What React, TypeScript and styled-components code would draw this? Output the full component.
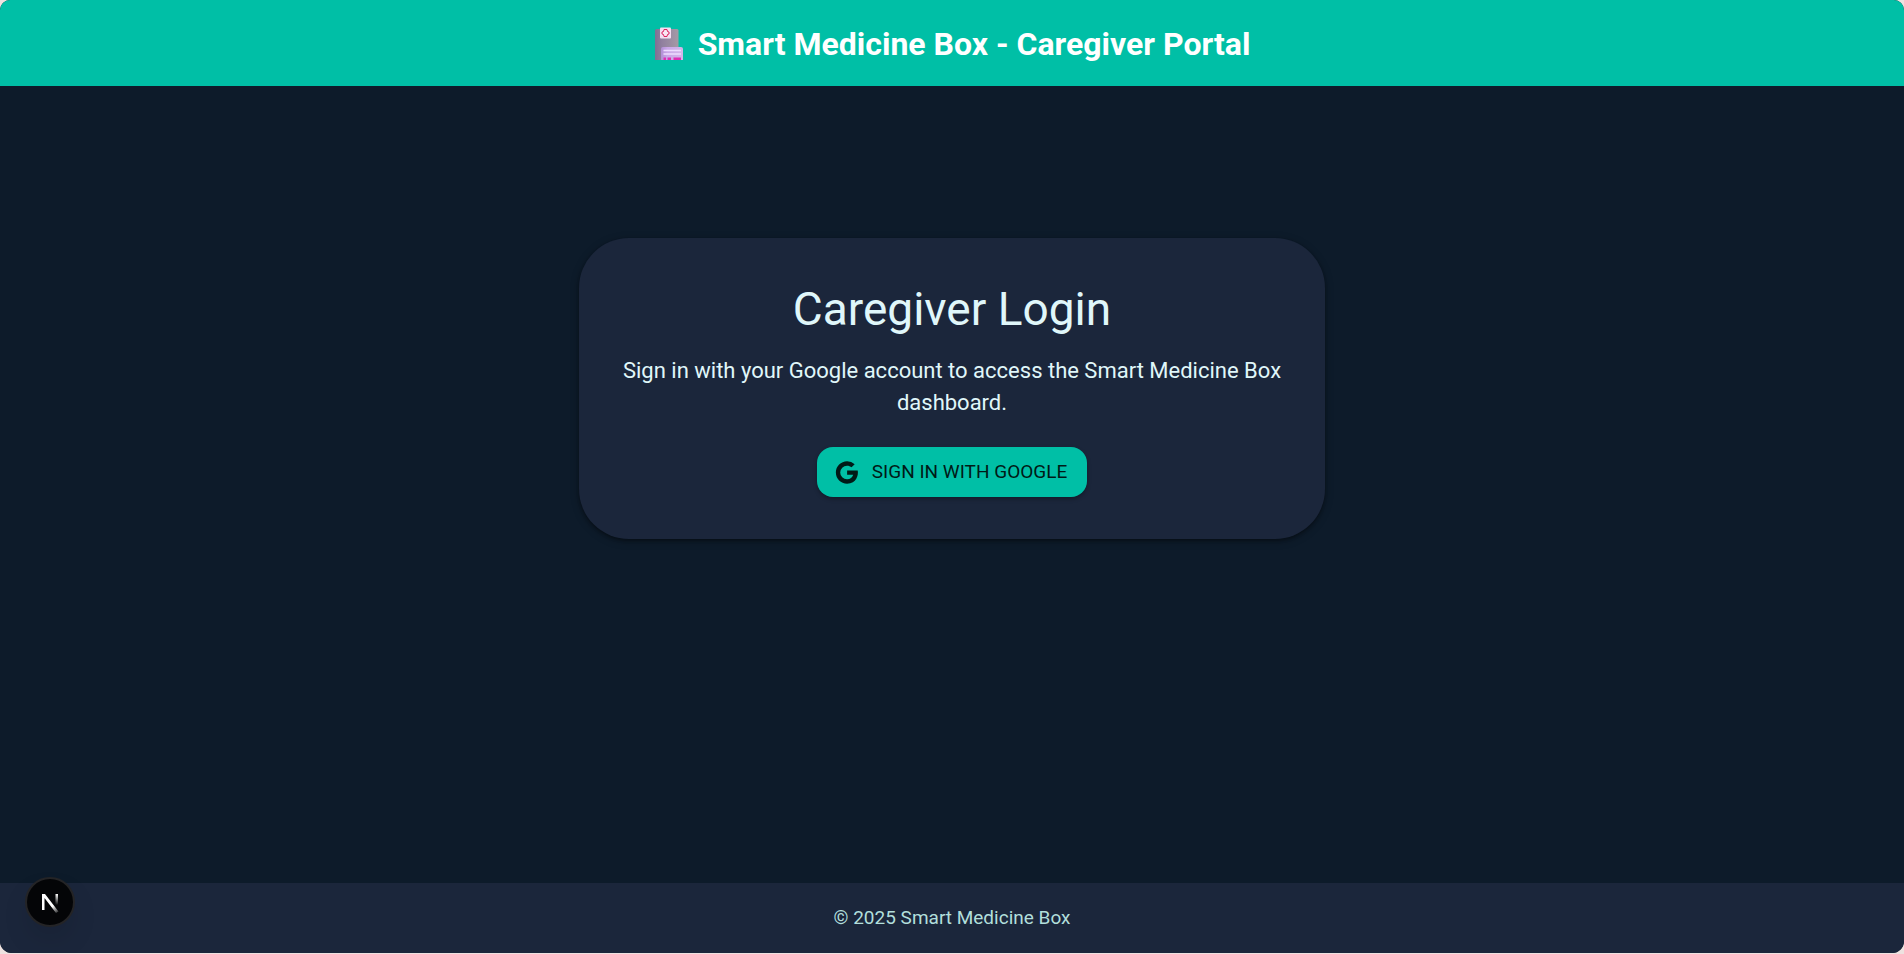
import React from "react";
import styled, { createGlobalStyle } from "styled-components";

const GlobalStyle = createGlobalStyle`
  *, *::before, *::after { box-sizing: border-box; }
  html { background: #eee2e0; }
  body {
    margin: 0;
    font-family: Roboto, "Liberation Sans", sans-serif;
    color: #e0f7fa;
  }
`;

const Page = styled.div`
  display: flex;
  flex-direction: column;
  min-height: calc(100vh - 1px);
  margin-bottom: 1px;
  border-radius: 10px 10px 12px 12px;
  overflow: hidden;
  background: #0d1b2a;
`;

const Header = styled.header`
  display: flex;
  align-items: center;
  justify-content: center;
  gap: 14px;
  padding: 21px 20px 19px;
  background: #00bfa6;
  color: #fff;
`;

const Brand = styled.h1`
  margin: 0;
  font-size: 32px;
  line-height: 46px;
  font-weight: 700;
`;

const Main = styled.main`
  flex: 1;
  display: flex;
  align-items: flex-start;
  justify-content: center;
  padding: 152px 20px 40px;
`;

const Card = styled.section`
  width: 100%;
  max-width: 746px;
  padding: 42px 40px;
  border-radius: 50px;
  background: #1b263b;
  box-shadow: 0 2px 3px rgba(0, 0, 0, 0.25), 0 2px 8px rgba(0, 0, 0, 0.3);
  text-align: center;
`;

const Title = styled.h2`
  margin: 0 0 17px;
  font-size: 46px;
  line-height: 58px;
  font-weight: 400;
`;

const Lead = styled.p`
  margin: 0 0 28px;
  font-size: 22px;
  line-height: 32px;
`;

const SignInButton = styled.button`
  display: inline-flex;
  align-items: center;
  gap: 12px;
  height: 50px;
  padding: 0 20px 0 16px;
  border: 0;
  border-radius: 16px;
  background: #00bfa6;
  color: #001a17;
  font-family: inherit;
  font-size: 19px;
  line-height: 32px;
  text-transform: uppercase;
  vertical-align: top;
  box-shadow: 0 2px 4px rgba(0, 0, 0, 0.3);
  cursor: pointer;
`;

const Footer = styled.footer`
  padding: 20px;
  background: #1b263b;
  color: #b2dfdb;
  font-size: 19px;
  line-height: 30px;
  text-align: center;
`;

const DevToolsButton = styled.button`
  position: fixed;
  left: 25px;
  bottom: 27px;
  display: flex;
  align-items: center;
  justify-content: center;
  width: 50px;
  height: 50px;
  padding: 0;
  border: 2px solid #242426;
  border-radius: 50%;
  background: #040507;
  box-shadow: 0 14px 32px -8px rgba(0, 0, 0, 0.2);
  cursor: pointer;

  svg {
    flex: none;
  }
`;

const HospitalIcon = () => (
  <svg width="30" height="34" viewBox="0 0 30 34" aria-hidden="true">
    <defs>
      <linearGradient id="tower" x1="0" y1="0" x2="1" y2="0">
        <stop offset="0" stopColor="#7d6f93" />
        <stop offset="0.3" stopColor="#91809f" />
        <stop offset="1" stopColor="#a59aa6" />
      </linearGradient>
      <linearGradient id="wing" x1="0" y1="0" x2="1" y2="0">
        <stop offset="0" stopColor="#b18fd6" />
        <stop offset="0.3" stopColor="#caa8e8" />
        <stop offset="1" stopColor="#d3b6ea" />
      </linearGradient>
    </defs>
    <path d="M1 33V3.500Q1 2 2.500 2H23Q24.500 2 24.500 3.500V33Z" fill="url(#tower)" />
    <path d="M7 33V22Q7 20 9 20H27Q29 20 29 22V33Z" fill="url(#wing)" />
    <path d="M9.500 23.500H27M9.500 27H27" stroke="#eedcff" strokeWidth="1.500" />
    <path d="M9.500 30.500H12V33H9.500ZM13.500 30.500H17V33H13.500ZM19.500 30.500H27V33H19.500Z" fill="#e02db4" />
    <rect x="6" y="0.500" width="11" height="11" rx="1" fill="#f3dff2" />
    <path
      d="M10 2.500H13L13.500 4.500L15 5V7L13.500 7.500L13 9.500H10L9.500 7.500L8 7V5L9.500 4.500Z"
      fill="#f9e6f4"
      stroke="#db2460"
      strokeWidth="1"
      strokeLinejoin="round"
    />
  </svg>
);

const GoogleIcon = () => (
  <svg width="27" height="27" viewBox="0 0 24 24" fill="currentColor" aria-hidden="true">
    <path d="M12.545 10.239v3.821h5.445c-.712 2.315-2.647 3.972-5.445 3.972a6.033 6.033 0 1 1 0-12.064c1.498 0 2.866.549 3.921 1.453l2.814-2.814A9.969 9.969 0 0 0 12.545 2C7.021 2 2.543 6.477 2.543 12s4.478 10 10.002 10c8.396 0 10.249-7.850 9.426-11.748l-9.426-.013z" />
  </svg>
);

const NextIcon = () => (
  <svg width="50" height="50" viewBox="0 0 50 50" fill="none" aria-hidden="true">
    <defs>
      <linearGradient id="diagonal" x1="26" y1="26" x2="33" y2="35" gradientUnits="userSpaceOnUse">
        <stop offset="0.300" stopColor="#fff" />
        <stop offset="1" stopColor="#fff" stopOpacity="0.200" />
      </linearGradient>
      <linearGradient id="stem" x1="0" y1="17" x2="0" y2="28" gradientUnits="userSpaceOnUse">
        <stop offset="0" stopColor="#fff" />
        <stop offset="1" stopColor="#fff" stopOpacity="0" />
      </linearGradient>
    </defs>
    <path d="M17 17H20L33.500 34.500L31 36L19.500 21V33H17Z" fill="url(#diagonal)" />
    <path d="M30.500 17H33V28H30.500Z" fill="url(#stem)" />
  </svg>
);

export default function App() {
  return (
    <>
      <GlobalStyle />
      <Page>
        <Header>
          <HospitalIcon />
          <Brand>Smart Medicine Box - Caregiver Portal</Brand>
        </Header>
        <Main>
          <Card>
            <Title>Caregiver Login</Title>
            <Lead>Sign in with your Google account to access the Smart Medicine Box dashboard.</Lead>
            <SignInButton type="button">
              <GoogleIcon />
              Sign in with Google
            </SignInButton>
          </Card>
        </Main>
        <Footer>© 2025 Smart Medicine Box</Footer>
      </Page>
      <DevToolsButton type="button" aria-label="Open Next.js Dev Tools">
        <NextIcon />
      </DevToolsButton>
    </>
  );
}
